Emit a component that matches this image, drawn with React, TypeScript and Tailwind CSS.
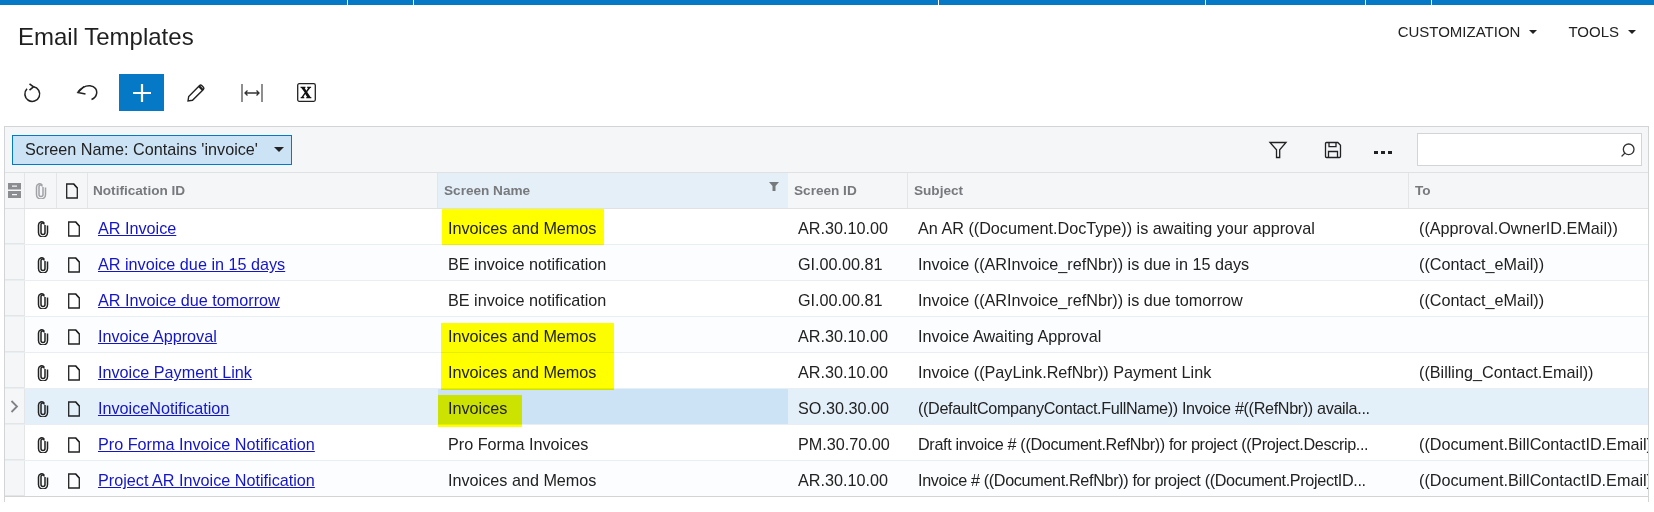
import { Search } from "lucide-react";

const rows = [
  { id: "AR Invoice", name: "Invoices and Memos", screen: "AR.30.10.00", subject: "An AR ((Document.DocType)) is awaiting your approval", to: "((Approval.OwnerID.EMail))", mark: "left-[4px] top-0 h-[36px] w-[162px]" },
  { id: "AR invoice due in 15 days", name: "BE invoice notification", screen: "GI.00.00.81", subject: "Invoice ((ARInvoice_refNbr)) is due in 15 days", to: "((Contact_eMail))" },
  { id: "AR Invoice due tomorrow", name: "BE invoice notification", screen: "GI.00.00.81", subject: "Invoice ((ARInvoice_refNbr)) is due tomorrow", to: "((Contact_eMail))" },
  { id: "Invoice Approval", name: "Invoices and Memos", screen: "AR.30.10.00", subject: "Invoice Awaiting Approval", to: "", mark: "left-[3px] top-[6px] h-[30px] w-[173px]" },
  { id: "Invoice Payment Link", name: "Invoices and Memos", screen: "AR.30.10.00", subject: "Invoice ((PayLink.RefNbr)) Payment Link", to: "((Billing_Contact.Email))", mark: "left-[3px] top-0 h-[37px] w-[173px]" },
  { id: "InvoiceNotification", name: "Invoices", screen: "SO.30.30.00", subject: "((DefaultCompanyContact.FullName)) Invoice #((RefNbr)) availa...", to: "", active: true, mark: "left-0 top-[6px] h-[32px] w-[84px]" },
  { id: "Pro Forma Invoice Notification", name: "Pro Forma Invoices", screen: "PM.30.70.00", subject: "Draft invoice # ((Document.RefNbr)) for project ((Project.Descrip...", to: "((Document.BillContactID.Email))" },
  { id: "Project AR Invoice Notification", name: "Invoices and Memos", screen: "AR.30.10.00", subject: "Invoice # ((Document.RefNbr)) for project ((Document.ProjectID...", to: "((Document.BillContactID.Email))" },
];

const Clip = ({ color = "#222" }: { color?: string }) => (
  <svg width="12" height="16" viewBox="0 0 12 16" fill="none" stroke={color} strokeWidth="1.5">
    <path d="M8 4v7.5a2 2 0 0 1-4 0V3.6a1.6 1.6 0 0 1 3.2 0" />
    <path d="M10.5 4.5v7a4.5 4.5 0 0 1-9 0V4a3.2 3.2 0 0 1 5.7-2" />
  </svg>
);

const Page = () => (
  <svg width="14" height="16" viewBox="0 0 14 16" fill="none" stroke="#222" strokeWidth="1.3">
    <path d="M1.7 1h7l3.6 4v10H1.7z" />
    <path d="M8.7 1l3.6 4" />
  </svg>
);

const Caret = () => <span className="ml-[9px] inline-block border-x-[4px] border-t-[4px] border-x-transparent border-t-[#222]" />;

export default function App() {
  return (
    <div className="h-[512px] w-[1654px] overflow-hidden bg-white text-[16.2px] text-[#222] [font-family:'Liberation_Sans',Arial,sans-serif]">
      <div className="flex h-[5px] bg-[#0679c6]">
        <div className="w-[348px] border-r border-white" />
        <div className="w-[66px] border-r border-white" />
        <div className="w-[525px] border-r border-white" />
        <div className="w-[267px] border-r border-white" />
        <div className="w-[160px] border-r border-white" />
        <div className="w-[66px] border-r border-white" />
      </div>

      <div className="flex h-[69px] justify-between pl-[18px] pr-[18px]">
        <h1 className="pt-[18px] text-[24px] leading-[28px] text-[#1f1f1f]">Email Templates</h1>
        <div className="flex gap-[31px] pt-[19px] text-[15px] leading-[16px]">
          <span className="flex items-center self-start">CUSTOMIZATION<Caret /></span>
          <span className="flex items-center self-start">TOOLS<Caret /></span>
        </div>
      </div>

      <div className="flex h-[37px] items-center pl-[14px]">
        <button className="flex w-[36px] justify-center">
          <svg width="20" height="20" viewBox="0 0 20 20" fill="none" stroke="#222" strokeWidth="1.6">
            <path d="M11.5 3.700A7.400 7.400 0 1 1 5 5.800" />
            <path d="M7.500.8l4 3-4 3.400" />
          </svg>
        </button>
        <button className="ml-[19px] flex w-[36px] justify-center">
          <svg width="22" height="18" viewBox="0 0 22 18" fill="none" stroke="#222" strokeWidth="1.5">
            <path d="M2 8C6 3 10 1.500 14 1.800c5 .4 7.500 4.200 6.500 8.200-.5 2.500-2.500 4.500-5 5.500" />
            <path d="M8 2.500L2 8.500 9.500 10" />
          </svg>
        </button>
        <button className="ml-[14px] flex h-[37px] w-[45px] items-center justify-center bg-[#0679c6]">
          <svg width="20" height="20" viewBox="0 0 20 20" stroke="#fff" strokeWidth="2.2">
            <path d="M10 1v18M1 10h18" />
          </svg>
        </button>
        <button className="ml-[14px] flex w-[36px] justify-center">
          <svg width="20" height="20" viewBox="0 0 20 20" fill="none" stroke="#222" strokeWidth="1.4">
            <path d="M2 18l.7-4.500L13.600 2.600a1.500 1.500 0 0 1 2.100 0l1.700 1.700a1.500 1.500 0 0 1 0 2.100L6.500 17.300z" />
            <path d="M13 3.200l3.800 3.800" strokeWidth="2.4" />
          </svg>
        </button>
        <button className="ml-[20px] flex w-[36px] justify-center">
          <svg width="22" height="18" viewBox="0 0 22 18" fill="none" stroke="#333" strokeWidth="1.1">
            <path d="M1 0v18M21 0v18" />
            <path d="M4 9h14M6.500 6.500L4 9l2.500 2.500M15.500 6.500L18 9l-2.500 2.500" strokeWidth="1.3" />
          </svg>
        </button>
        <button className="ml-[18px] flex w-[36px] justify-center">
          <svg width="19" height="19" viewBox="0 0 19 19">
            <rect x="0.7" y="0.7" width="17.6" height="17.6" rx="1.5" fill="none" stroke="#222" strokeWidth="1.3" />
            <path d="M3.500 3.800h5v1l-.8.2 1.700 2.800 1.600-2.700-.9-.3v-1h4v1l-.9.3-3 4 3.300 4.800.9.3v1h-5.200v-1l.9-.3-1.900-3-1.800 3 .9.3v1H3.600v-1l.9-.3 3.200-4.500L4.400 5l-.9-.2z" fill="#111" />
          </svg>
        </button>
      </div>

      <div className="ml-[4px] mt-[15px] flex h-[376px] w-[1645px] flex-col overflow-hidden border-x border-t border-[#d2d4d6]">
        <div className="flex h-[45px] shrink-0 items-center bg-[#f4f6f8] pl-[7px] pr-[6px]">
          <div className="flex h-[30px] w-[280px] items-center border border-[#0679c6] bg-[#cce2f5] pl-[12px] pr-[7px]">
            <span className="flex-1">Screen Name: Contains 'invoice'</span>
            <span className="inline-block border-x-[5px] border-t-[5px] border-x-transparent border-t-[#222]" />
          </div>
          <div className="ml-auto flex items-center">
            <svg width="20" height="18" viewBox="0 0 20 18" fill="none" stroke="#222" strokeWidth="1.3">
              <path d="M2 1.500h16l-6.300 7.200v7.800h-3.200V8.700z" />
            </svg>
            <svg className="ml-[36px]" width="18" height="18" viewBox="0 0 18 18" fill="none" stroke="#222" strokeWidth="1.3">
              <path d="M1.500 2.500a1 1 0 0 1 1-1h11.300l2.700 2.700v11.300a1 1 0 0 1-1 1h-13a1 1 0 0 1-1-1z" />
              <path d="M5 1.500v4.200h7V1.500M4.500 16.500V10.500h9v6" />
            </svg>
            <span className="ml-[32px] mt-[6px] flex h-[8px] items-center gap-[3px]">
              <i className="h-[3px] w-[4px] bg-[#222]" />
              <i className="h-[3px] w-[4px] bg-[#222]" />
              <i className="h-[3px] w-[4px] bg-[#222]" />
            </span>
            <div className="ml-[25px] flex h-[33px] w-[225px] items-center justify-end border border-[#d2d4d6] bg-white pr-[5px]">
              <Search size={16} strokeWidth={2} className="scale-x-[-1] text-[#333]" />
            </div>
          </div>
        </div>

        <div className="flex h-[37px] shrink-0 items-center border-y border-[#dfe1e3] bg-[#f4f6f8] text-[13.6px] font-bold text-[#77797c]">
          <div className="flex h-full w-[20px] items-center justify-center border-r border-[#e3e5e7]">
            <svg width="13" height="15" viewBox="0 0 13 15" fill="#8b8d90">
              <path d="M0 0h13v6.500H0zM0 8h13v7H0z" />
              <path d="M4 2.500h5v1.200H4zM4 11h5v1.200H4z" fill="#f4f6f8" />
            </svg>
          </div>
          <div className="flex h-full w-[32px] items-center justify-center border-r border-[#e3e5e7] pl-[1px]"><Clip color="#a0a2a5" /></div>
          <div className="flex h-full w-[31px] items-center justify-center border-r border-[#e3e5e7]"><Page /></div>
          <div className="flex h-full w-[350px] items-center border-r border-[#e3e5e7] pl-[5px] pt-[2px]">Notification ID</div>
          <div className="relative flex h-full w-[350px] items-center bg-[#e4eff8] pl-[6px] pt-[2px]">
            Screen Name
            <span className="absolute right-[9px] top-[9px] h-[9px] w-[10px] bg-[#77797c] [clip-path:polygon(0_0,100%_0,65%_45%,65%_100%,35%_100%,35%_45%)]" />
          </div>
          <div className="flex h-full w-[120px] items-center border-r border-[#e3e5e7] pl-[6px] pt-[2px]">Screen ID</div>
          <div className="flex h-full w-[501px] items-center border-r border-[#e3e5e7] pl-[6px] pt-[2px]">Subject</div>
          <div className="flex h-full flex-1 items-center pl-[6px] pt-[2px]">To</div>
        </div>

        {rows.map((r, i) => (
          <div key={r.id} className={`flex h-[36px] shrink-0 items-center border-b ${i === rows.length - 1 ? "border-[#d2d4d6]" : "border-[#e9eef2]"} ${r.active ? "bg-[#e4f0f9]" : i % 2 ? "bg-[#fbfdfe]" : "bg-white"}`}>
            <div className="flex h-full w-[20px] items-center justify-center border-r border-b border-[#e3e5e7] bg-[#f4f6f8]">
              {r.active && (
                <svg width="9" height="13" viewBox="0 0 9 13" fill="none" stroke="#808285" strokeWidth="1.8">
                  <path d="M1.500 1l5.500 5.500L1.500 12" />
                </svg>
              )}
            </div>
            <div className="flex w-[32px] justify-center pl-[4px] pt-[4px]"><Clip /></div>
            <div className="flex w-[31px] justify-center pl-[3px] pt-[4px]"><Page /></div>
            <div className="w-[350px] pl-[10px] pt-[4px]">
              <a href="#" className="text-[#1414c8] underline">{r.id}</a>
            </div>
            <div className={`relative flex h-full w-[350px] items-center pl-[10px] pt-[4px] ${r.active ? "bg-[#cce2f5]" : ""}`}>
              {r.mark && <span className={`absolute z-10 bg-[#ffff00] mix-blend-multiply ${r.mark}`} />}
              <span className="relative z-20">{r.name}</span>
            </div>
            <div className="w-[120px] pl-[10px] pt-[4px]">{r.screen}</div>
            <div className={`w-[501px] whitespace-nowrap pl-[10px] pt-[4px] ${r.subject.endsWith("...") ? "tracking-[-0.35px]" : ""}`}>{r.subject}</div>
            <div className="w-[239px] overflow-hidden whitespace-nowrap pl-[10px] pt-[4px]">{r.to}</div>
          </div>
        ))}
      </div>
    </div>
  );
}
